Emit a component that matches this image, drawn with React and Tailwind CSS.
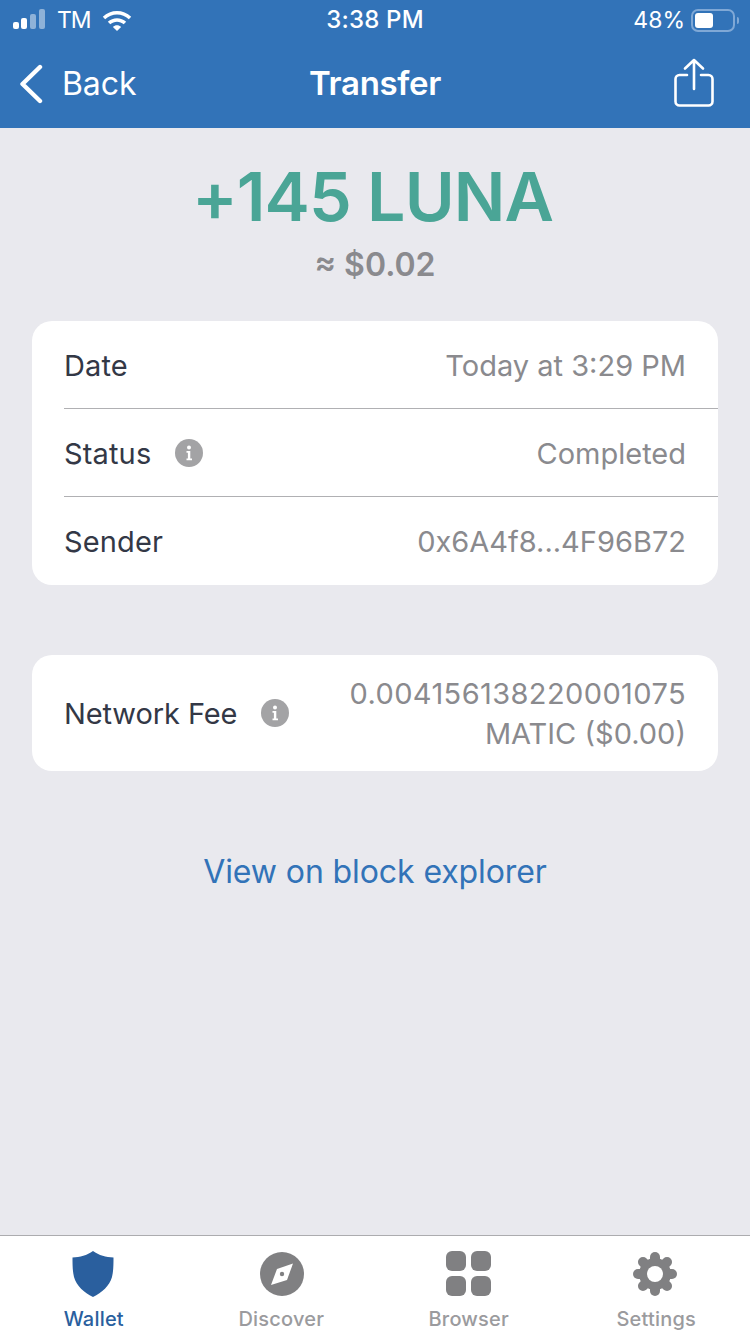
const font = { fontFamily: "Inter, 'Liberation Sans', sans-serif" };

function Info() {
  return (
    <svg width="28" height="28" viewBox="0 0 28 28" className="shrink-0">
      <circle cx="14" cy="14" r="14" fill="#a3a3a5" />
      <circle cx="14" cy="8.5" r="2" fill="#fff" />
      <path d="M11.5 12h3.8v7.5H17v1.7h-5.5v-1.7h1.4V13.700h-1.400z" fill="#fff" />
    </svg>
  );
}

function Row({ label, value, info, border }) {
  return (
    <div className={`ml-8 h-[88px] flex items-center pr-8 ${border ? "border-b border-[#b0b0b3]" : ""}`}>
      <span className="pt-[2px] text-[29px] tracking-[0.15px] text-[#333846]">{label}</span>
      {info && <span className="ml-6 flex"><Info /></span>}
      <span className="pt-[2px] ml-auto text-[29px] text-[#8a8a8e]">{value}</span>
    </div>
  );
}

function Tab({ label, active, children }) {
  return (
    <div className="w-[187.5px] flex flex-col items-center">
      <div className="h-[46px] flex items-center justify-center">{children}</div>
      <span className={`mt-[10px] text-[20px] leading-[24px] font-medium tracking-[0.2px] ${active ? "text-[#2a5f9e]" : "text-[#9b9b9e]"}`}>{label}</span>
    </div>
  );
}

export default function App() {
  return (
    <div style={font} className="w-[750px] h-[1334px] flex flex-col bg-[#e9e9ee] overflow-hidden">
      <header className="h-[128px] bg-[#3273b8] text-white shrink-0 flex flex-col">
        <div className="h-[40px] px-[13px] flex items-center justify-between relative">
          <div className="flex items-center">
            <svg width="34" height="22" viewBox="0 0 34 22">
              <rect x="0" y="13" width="6" height="7" rx="2" fill="#fff" />
              <rect x="8" y="9" width="6" height="11" rx="2" fill="#fff" />
              <rect x="17" y="5" width="6" height="15" rx="2" fill="#fff" opacity="0.45" />
              <rect x="26" y="0" width="6" height="20" rx="2" fill="#fff" opacity="0.45" />
            </svg>
            <span className="ml-[10px] text-[23px] leading-none tracking-[-1px]">TM</span>
            <svg width="30" height="22" viewBox="0 0 32 24" className="ml-[11px]">
              <path d="M0.5 8.5C9 0 23 0 31.5 8.5l-2.6 2.7C21.8 4.3 10.2 4.3 3.1 11.2z" fill="#fff" />
              <path d="M6 14C11.5 8.7 20.5 8.7 26 14l-2.7 2.7C19.3 13 12.7 13 8.7 16.7z" fill="#fff" />
              <path d="M11.5 19.5c2.6-2.3 6.4-2.3 9 0L16 24z" fill="#fff" />
            </svg>
          </div>
          <span className="absolute left-0 right-0 text-center text-[24px] font-medium tracking-[0.2px]">3:38 PM</span>
          <div className="flex items-center mr-[-2px]">
            <span className="text-[23px] leading-none">48%</span>
            <span className="ml-[6px] w-[44px] h-[23px] border-2 border-[#7fa8d6] rounded-[7px] p-[2px] flex">
              <span className="w-[18px] bg-white rounded-[3px]" />
            </span>
            <span className="ml-[2px] w-[2px] h-[7px] bg-[#7fa8d6] rounded-r" />
          </div>
        </div>
        <div className="flex-1 flex items-center px-[19px] relative">
          <svg width="24" height="40" viewBox="0 0 24 40" fill="none" stroke="#fff" strokeWidth="4.4" strokeLinecap="round" strokeLinejoin="round">
            <path d="M21 3 L3.5 20 L21 37" />
          </svg>
          <span className="ml-[19px] text-[32px] tracking-[-0.1px]">Back</span>
          <span className="absolute left-0 right-0 text-center text-[33px] font-semibold tracking-[-0.3px]">Transfer</span>
          <svg width="40" height="49" viewBox="0 0 40 49" fill="none" stroke="#fff" strokeWidth="2.6" strokeLinecap="round" strokeLinejoin="round" className="ml-auto mr-[17px] mt-[-3px]">
            <path d="M13 17H5.5a4 4 0 0 0-4 4v22.5a4 4 0 0 0 4 4h29a4 4 0 0 0 4-4V21a4 4 0 0 0-4-4H27" />
            <path d="M20 31V2M11 10.5 20 2l9 8.5" />
          </svg>
        </div>
      </header>

      <main className="flex-1 flex flex-col items-center">
        <div className="mt-[28px] mr-[5px] text-[68px] leading-[80px] font-semibold tracking-[-0.9px] text-[#4aa596]">+145 LUNA</div>
        <div className="mt-[9px] text-[32px] leading-[40px] font-semibold text-[#8a8a8e]">≈ $0.02</div>

        <section className="mt-[36px] w-[686px] bg-white rounded-[20px]">
          <Row label="Date" value="Today at 3:29 PM" border />
          <Row label="Status" value="Completed" info border />
          <Row label="Sender" value="0x6A4f8...4F96B72" />
        </section>

        <section className="mt-[70px] w-[686px] h-[116px] bg-white rounded-[20px] flex items-center pl-8 pr-8">
          <span className="pt-[2px] text-[29px] tracking-[-0.1px] text-[#333846]">Network Fee</span>
          <span className="ml-6 flex"><Info /></span>
          <span className="pt-[2px] ml-auto text-right text-[29px] leading-[40px] text-[#8a8a8e]">
            <span className="tracking-[0.4px]">0.004156138220001075</span><br />MATIC ($0.00)
          </span>
        </section>

        <div className="mt-[81px] text-[32px] leading-[40px] tracking-[-0.1px] text-[#3273b8]">View on block explorer</div>
      </main>

      <nav className="h-[99px] shrink-0 bg-white border-t border-[#acacaf] flex pt-[15px]">
        <Tab label="Wallet" active>
          <svg width="42" height="46" viewBox="0 0 42 46" className="mr-[2px]">
            <path d="M21 0C27 4.5 34 6 41.5 6.5 41.500 13 41.500 20 40 26 37.500 35 30 41.500 21 46 12 41.500 4.500 35 2 26 0.500 20 0.500 13 0.500 6.500 8 6 15 4.500 21 0z" fill="#2a5f9e" />
          </svg>
        </Tab>
        <Tab label="Discover">
          <svg width="44" height="44" viewBox="0 0 44 44" className="ml-[1px]">
            <circle cx="22" cy="22" r="22" fill="#808082" />
            <path d="M33 11.500 27 28 11 33 17 17z" fill="#fff" />
            <circle cx="22" cy="22" r="2.200" fill="#808082" />
          </svg>
        </Tab>
        <Tab label="Browser">
          <svg width="46" height="46" viewBox="0 0 46 46" fill="#808082">
            <rect x="0" y="0" width="20" height="20" rx="6" />
            <rect x="25" y="0" width="20" height="20" rx="6" />
            <rect x="0" y="25" width="20" height="20" rx="6" />
            <rect x="25" y="25" width="20" height="20" rx="6" />
          </svg>
        </Tab>
        <Tab label="Settings">
          <svg width="46" height="46" viewBox="0 0 46 46" className="mr-[2px]">
            <g fill="#808082">
              <circle cx="23" cy="23" r="16" />
              <rect x="18" y="1" width="10" height="44" rx="5" />
              <rect x="18" y="1" width="10" height="44" rx="5" transform="rotate(45 23 23)" />
              <rect x="18" y="1" width="10" height="44" rx="5" transform="rotate(90 23 23)" />
              <rect x="18" y="1" width="10" height="44" rx="5" transform="rotate(135 23 23)" />
            </g>
            <circle cx="23" cy="23" r="8" fill="#fff" />
          </svg>
        </Tab>
      </nav>
    </div>
  );
}
